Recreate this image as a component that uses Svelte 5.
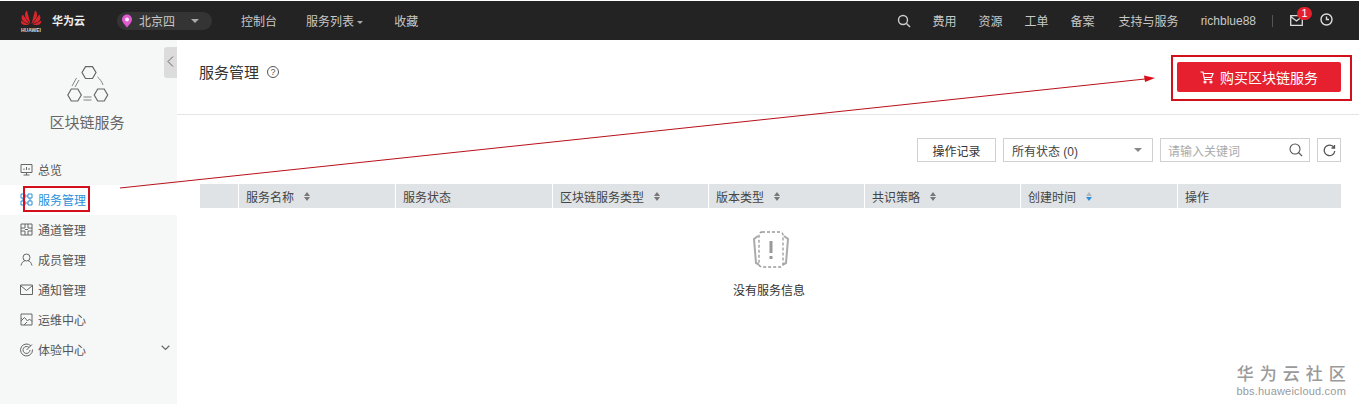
<script>
  const columns = [
    { name: "", width: 38 },
    { name: "服务名称", width: 157, sort: true },
    { name: "服务状态", width: 157 },
    { name: "区块链服务类型", width: 156, sort: true },
    { name: "版本类型", width: 156, sort: true },
    { name: "共识策略", width: 156, sort: true },
    { name: "创建时间", width: 157, sort: true, active: true },
    { name: "操作", width: 164 }
  ];
  const nav = ["费用", "资源", "工单", "备案", "支持与服务"];
  const menu = [
    { label: "总览", icon: "M2 2.5h11v8H2zM7.5 10.5v2.5M4.5 13h6M5 8V6.5M7.5 8V5M10 8V6" },
    { label: "服务管理", active: true, icon: "M2 2h4v4H2zM9 2h4v4H9zM2 9h4v4H2zM9 9h4v4H9zM6 4h3M6 11h3M4 6v3M11 6v3" },
    { label: "通道管理", icon: "M2 2h11v11H2zM2 6h4V2M13 6H9V2M2 9h4v4M13 9H9v4M6 7.5h3" },
    { label: "成员管理", icon: "M7.5 2a3 3 0 0 1 0 7a3 3 0 0 1 0-7M2 13.5c.6-3 2.6-4.6 4-4.8M13 13.5c-.6-3-2.6-4.6-4-4.8" },
    { label: "通知管理", icon: "M1.5 3h12v9.5h-12zM1.5 3.5l6 5l6-5" },
    { label: "运维中心", icon: "M2 2h11v11H2zM2 9l3.5-3.5l3 3.5l2-2l2.5 2.5M2 6l2 2M5 13l3-3" },
    { label: "体验中心", caret: true, icon: "M12 4a6 6 0 1 0 1.5 3.5M10 5.5a3.5 3.5 0 1 0 1 2.5M7.5 8l5.5-5.500M7.500 8h.01" }
  ];
</script>

<div class="page">
  <header class="topbar">
    <div class="brand">
      <svg class="logo" width="22" height="23" viewBox="0 0 22 23">
        <g fill="#d9262c">
          <path d="M10.500 15 7 1.500C4.500 3 4.500 7 6 9.500z" />
          <path d="M11.500 15 15 1.500C17.500 3 17.500 7 16 9.500z" />
          <path d="M9.800 15.500 2.800 5.500C.8 8 1.500 11 3.500 12.500z" />
          <path d="M12.200 15.500 19.200 5.500C21.200 8 20.500 11 18.500 12.500z" />
          <path d="M9 16 .8 11.500C.6 14.500 2.500 16 5 16z" />
          <path d="M13 16 21.200 11.500C21.400 14.500 19.500 16 17 16z" />
        </g>
        <text x="11" y="22.500" class="logo-text" text-anchor="middle">HUAWEI</text>
      </svg>
      <span class="brand-name">华为云</span>
    </div>
    <div class="region">
      <svg width="12" height="14" viewBox="0 0 12 14">
        <path d="M6 13.500C2.500 9.500 1 7.500 1 5.500a5 5 0 0 1 10 0c0 2-1.500 4-5 8z" fill="#e05ad0" />
        <circle cx="6" cy="5.500" r="2" fill="#f6e9f4" />
      </svg>
      <span>北京四</span>
      <i class="tri"></i>
    </div>
    <nav class="links">
      <span>控制台</span>
      <span>服务列表 <i class="tri small"></i></span>
      <span>收藏</span>
    </nav>
    <div class="right">
      <svg class="search" width="14" height="14" viewBox="0 0 14 14" fill="none" stroke="#ccc" stroke-width="1.400">
        <circle cx="6" cy="6" r="4.500" /><path d="M9.500 9.500 13 13" />
      </svg>
      {#each nav as item}
        <span>{item}</span>
      {/each}
      <span class="user">richblue88</span>
      <i class="sep"></i>
      <div class="mail">
        <svg width="13" height="11" viewBox="0 0 13 11" fill="none" stroke="#ddd" stroke-width="1.300">
          <path d="M.7.700h11.600v9.600H.7zM.7 1.500l5.800 4.500l5.800-4.500" />
        </svg>
        <b class="badge">1</b>
      </div>
      <svg class="clock" width="13" height="13" viewBox="0 0 13 13" fill="none" stroke="#ddd" stroke-width="1.400">
        <circle cx="6.500" cy="6.500" r="5.500" /><path d="M6.500 3.500v3h2.500" />
      </svg>
    </div>
  </header>

  <div class="body">
    <aside class="sidebar">
      <div class="collapse">
        <svg width="7" height="11" viewBox="0 0 7 11" fill="none" stroke="#666" stroke-width="1">
          <path d="M6 .5 1 5.500l5 5" />
        </svg>
      </div>
      <svg class="service-icon" width="42" height="37" viewBox="0 0 42 37" fill="none" stroke="#666" stroke-width="1.200">
        <path d="M15 6.500 18.500.6h7L29 6.500l-3.500 6h-7zM.8 29 4.300 23h6.500l3.500 6-3.500 6h-6.500zM27.200 29l3.500-6h6.500l3.500 6-3.500 6h-6.500z" />
        <path d="M5 20l4.500-8M8 21l4-7M36 19c-1-3-3-6-5.500-8M16.500 31h8M16.500 34h8" stroke-width="0.800" />
      </svg>
      <div class="service-name">区块链服务</div>
      <ul class="menu">
        {#each menu as item}
          <li class:active={item.active}>
            <svg width="15" height="15" viewBox="0 0 15 15" fill="none" stroke="currentColor" stroke-width="1">
              <path d={item.icon} />
            </svg>
            <span>{item.label}</span>
            {#if item.caret}
              <svg class="caret" width="9" height="6" viewBox="0 0 9 6" fill="none" stroke="#666" stroke-width="1.200">
                <path d="M.7.800 4.500 4.500 8.300.8" />
              </svg>
            {/if}
          </li>
        {/each}
      </ul>
    </aside>

    <main class="main">
      <section class="title-row">
        <h1>服务管理</h1>
        <span class="help">?</span>
        <button class="buy">
          <svg width="14" height="13" viewBox="0 0 14 13" fill="none" stroke="#fff" stroke-width="1.200">
            <path d="M.5 1h2.500l1.500 7.500h7M3.500 2.500h9.500l-1.500 4h-7" />
            <circle cx="5" cy="11" r="1" /><circle cx="11" cy="11" r="1" />
          </svg>
          购买区块链服务
        </button>
      </section>

      <section class="content">
        <div class="toolbar">
          <button class="btn">操作记录</button>
          <div class="select">所有状态 (0)<i class="tri dark"></i></div>
          <div class="input">
            <span>请输入关键词</span>
            <svg width="14" height="14" viewBox="0 0 14 14" fill="none" stroke="#555" stroke-width="1.100">
              <circle cx="6" cy="6" r="5" /><path d="M9.500 9.500 13 13" />
            </svg>
          </div>
          <button class="btn refresh" aria-label="刷新">
            <svg width="13" height="13" viewBox="0 0 13 13" fill="none" stroke="#555" stroke-width="1.300">
              <path d="M11 3.500A5.300 5.300 0 1 0 11.800 7M11.500 1v3h-3" />
            </svg>
          </button>
        </div>

        <div class="thead">
          {#each columns as col}
            <div class="th" style:width="{col.width}px">
              {col.name}
              {#if col.sort}
                <span class="sort" class:active={col.active}><i></i><i></i></span>
              {/if}
            </div>
          {/each}
        </div>

        <div class="empty">
          <svg width="40" height="40" viewBox="0 0 40 40" fill="none">
            <path d="M7 6 3 9l2 24 4 2M33 6l4 3-2 24-4 2" stroke="#aaa" stroke-width="2" />
            <rect x="8" y="2" width="24" height="35" rx="3" fill="#fff" stroke="#999" stroke-width="1.300" stroke-dasharray="3 2" />
            <path d="M20 11v12" stroke="#999" stroke-width="3" />
            <path d="M20 26v3" stroke="#999" stroke-width="3" />
          </svg>
          <p>没有服务信息</p>
        </div>
      </section>
    </main>
  </div>

  <!-- red annotations drawn over the screenshot -->
  <div class="mark mark-menu"></div>
  <div class="mark mark-buy"></div>
  <svg class="arrow" width="1359" height="404" viewBox="0 0 1359 404">
    <path d="M120 188 1145 79" stroke="#b8101a" stroke-width="1" />
    <path d="M1155 78 1144 75.500 1145 82z" fill="#d8101a" />
  </svg>

  <div class="watermark">
    <div class="wm-title">华为云社区</div>
    <div class="wm-url">bbs.huaweicloud.com</div>
  </div>
</div>

<style>
  :global(body) {
    margin: 0;
    background: #fff;
  }
  .page {
    position: relative;
    width: 1359px;
    height: 404px;
    overflow: hidden;
    font-family: "Liberation Sans", "Noto Sans CJK SC", sans-serif;
    font-size: 12px;
    color: #333;
  }
  i { font-style: normal; display: inline-block; }

  .topbar {
    display: flex;
    align-items: center;
    height: 39px;
    margin-top: 1px;
    background: #232323;
    color: #c8c8c8;
  }
  .brand {
    display: flex;
    align-items: center;
    width: 117px;
    padding-left: 20px;
    box-sizing: border-box;
    gap: 10px;
  }
  .logo-text { font-size: 5px; font-weight: 700; fill: #ddd; }
  .brand-name { color: #eee; font-weight: 700; font-size: 11px; margin-bottom: 2px; }
  .region {
    display: flex;
    align-items: center;
    gap: 6px;
    width: 95px;
    height: 18px;
    padding-left: 4px;
    box-sizing: border-box;
    background: #343434;
    border-radius: 9px;
  }
  .region span { width: 46px; }
  .tri {
    width: 0;
    height: 0;
    border: 4px solid transparent;
    border-top: 4px solid #aaa;
    border-bottom: 0;
  }
  .tri.small { border-width: 3px; border-bottom: 0; margin-bottom: 2px; }
  .tri.dark { border-top-color: #888; }
  .links {
    display: flex;
    gap: 29px;
    margin-left: 29px;
  }
  .links span:last-child { margin-left: 2px; }
  .right {
    display: flex;
    align-items: center;
    margin-left: auto;
    padding-right: 26px;
    gap: 22px;
  }
  .right > span:nth-of-type(5) { margin-left: 2px; }
  .sep { width: 1px; height: 12px; background: #555; margin: 0 -6px 0 -6px; }
  .mail { position: relative; display: flex; margin-left: 1px; }
  .badge {
    position: absolute;
    top: -8px;
    left: 7px;
    width: 15px;
    height: 13px;
    border-radius: 7px;
    background: #e3202c;
    color: #fff;
    font-size: 11px;
    font-weight: 400;
    line-height: 13px;
    text-align: center;
  }
  .clock { margin-left: -5px; margin-bottom: 2px; }

  .body { display: flex; height: 364px; }
  .sidebar {
    position: relative;
    flex: none;
    display: flex;
    flex-direction: column;
    align-items: center;
    width: 177px;
    background: #f6f7f7;
  }
  .collapse {
    position: absolute;
    top: 7px;
    right: 0;
    display: flex;
    justify-content: center;
    padding-top: 9px;
    box-sizing: border-box;
    width: 13px;
    height: 31px;
    background: #dcdcdc;
    border-radius: 3px 0 0 3px;
  }
  .service-icon { margin-top: 26px; margin-left: -2px; }
  .service-name { margin-top: 9px; font-size: 15px; line-height: 22px; color: #666; margin-left: -3px; }
  .menu {
    align-self: stretch;
    list-style: none;
    margin: 21px 0 0;
    padding: 0;
  }
  .menu li {
    display: flex;
    align-items: center;
    gap: 4px;
    height: 30px;
    padding-left: 19px;
    padding-bottom: 1px;
    box-sizing: border-box;
    color: #666;
  }
  .menu li span { color: #555; }
  .menu li.active { background: #fff; color: #2c8fdb; }
  .menu li.active span { color: #2c8fdb; }
  .caret { margin-left: 71px; margin-bottom: 3px; }

  .main { flex: 1; min-width: 0; }
  .title-row {
    display: flex;
    height: 75px;
    padding: 0 18px 0 22px;
    border-bottom: 1px solid #e4e4e4;
    box-sizing: border-box;
  }
  .title-row h1 {
    margin: 23px 0 0;
    font-size: 15px;
    line-height: 20px;
    font-weight: 400;
    color: #333;
  }
  .help {
    width: 10px;
    height: 10px;
    margin: 26px 0 0 8px;
    border: 1px solid #555;
    border-radius: 50%;
    font-size: 9px;
    line-height: 10px;
    text-align: center;
    color: #555;
  }
  .buy {
    display: flex;
    align-items: center;
    justify-content: center;
    gap: 6px;
    width: 164px;
    height: 30px;
    margin: 22px 0 0 auto;
    border: 0;
    border-radius: 2px;
    background: #e6202e;
    color: #fff;
    font: inherit;
    font-size: 14px;
  }

  .content { padding: 0 18px 0 23px; }
  .toolbar {
    display: flex;
    justify-content: flex-end;
    gap: 7px;
    margin-top: 23px;
  }
  .btn {
    height: 24px;
    width: 79px;
    padding: 0;
    border: 1px solid #d0d0d0;
    background: #fff;
    font: inherit;
    color: #333;
  }
  .refresh {
    display: flex;
    align-items: center;
    justify-content: center;
    width: 24px;
  }
  .select {
    display: flex;
    align-items: center;
    justify-content: space-between;
    width: 150px;
    height: 24px;
    padding: 0 10px 0 8px;
    border: 1px solid #d0d0d0;
    box-sizing: border-box;
    color: #444;
  }
  .input {
    display: flex;
    align-items: center;
    justify-content: space-between;
    width: 150px;
    height: 24px;
    padding: 0 6px 0 7px;
    border: 1px solid #d0d0d0;
    box-sizing: border-box;
    color: #aaa;
  }
  .thead {
    display: flex;
    margin-top: 22px;
    height: 24px;
    background: #e0e3e5;
  }
  .th {
    display: flex;
    align-items: center;
    box-sizing: border-box;
    padding-left: 7px;
    border-left: 1px solid #fff;
    color: #444;
  }
  .th:first-child { border-left: 0; }
  .sort {
    display: flex;
    flex-direction: column;
    gap: 1px;
    margin-left: 10px;
  }
  .sort i {
    width: 0;
    height: 0;
    border: 3.5px solid transparent;
    border-bottom: 4px solid #777;
    border-top: 0;
  }
  .sort i + i {
    border-bottom: 0;
    border-top: 4px solid #777;
  }
  .sort.active i { border-bottom-color: #b4b8ba; }
  .sort.active i + i { border-top-color: #2c8fdb; }
  .empty {
    display: flex;
    flex-direction: column;
    align-items: center;
    margin-top: 22px;
  }
  .empty p { margin: 12px 0 0; color: #333; line-height: 18px; margin-left: -3px; }

  .mark {
    position: absolute;
    box-sizing: border-box;
    border: 2px solid #d2101c;
  }
  .mark-menu { left: 23px; top: 186px; width: 67px; height: 26px; }
  .mark-buy { left: 1171px; top: 55px; width: 181px; height: 46px; }
  .arrow { position: absolute; left: 0; top: 0; pointer-events: none; }

  .watermark {
    position: absolute;
    right: 13px;
    bottom: 6px;
    text-align: center;
    color: #9a9a9a;
  }
  .wm-title { font-size: 17px; line-height: 20px; letter-spacing: 6px; margin-right: -6px; font-weight: 500; }
  .wm-url { font-size: 11px; line-height: 13px; letter-spacing: 0.2px; }
</style>
